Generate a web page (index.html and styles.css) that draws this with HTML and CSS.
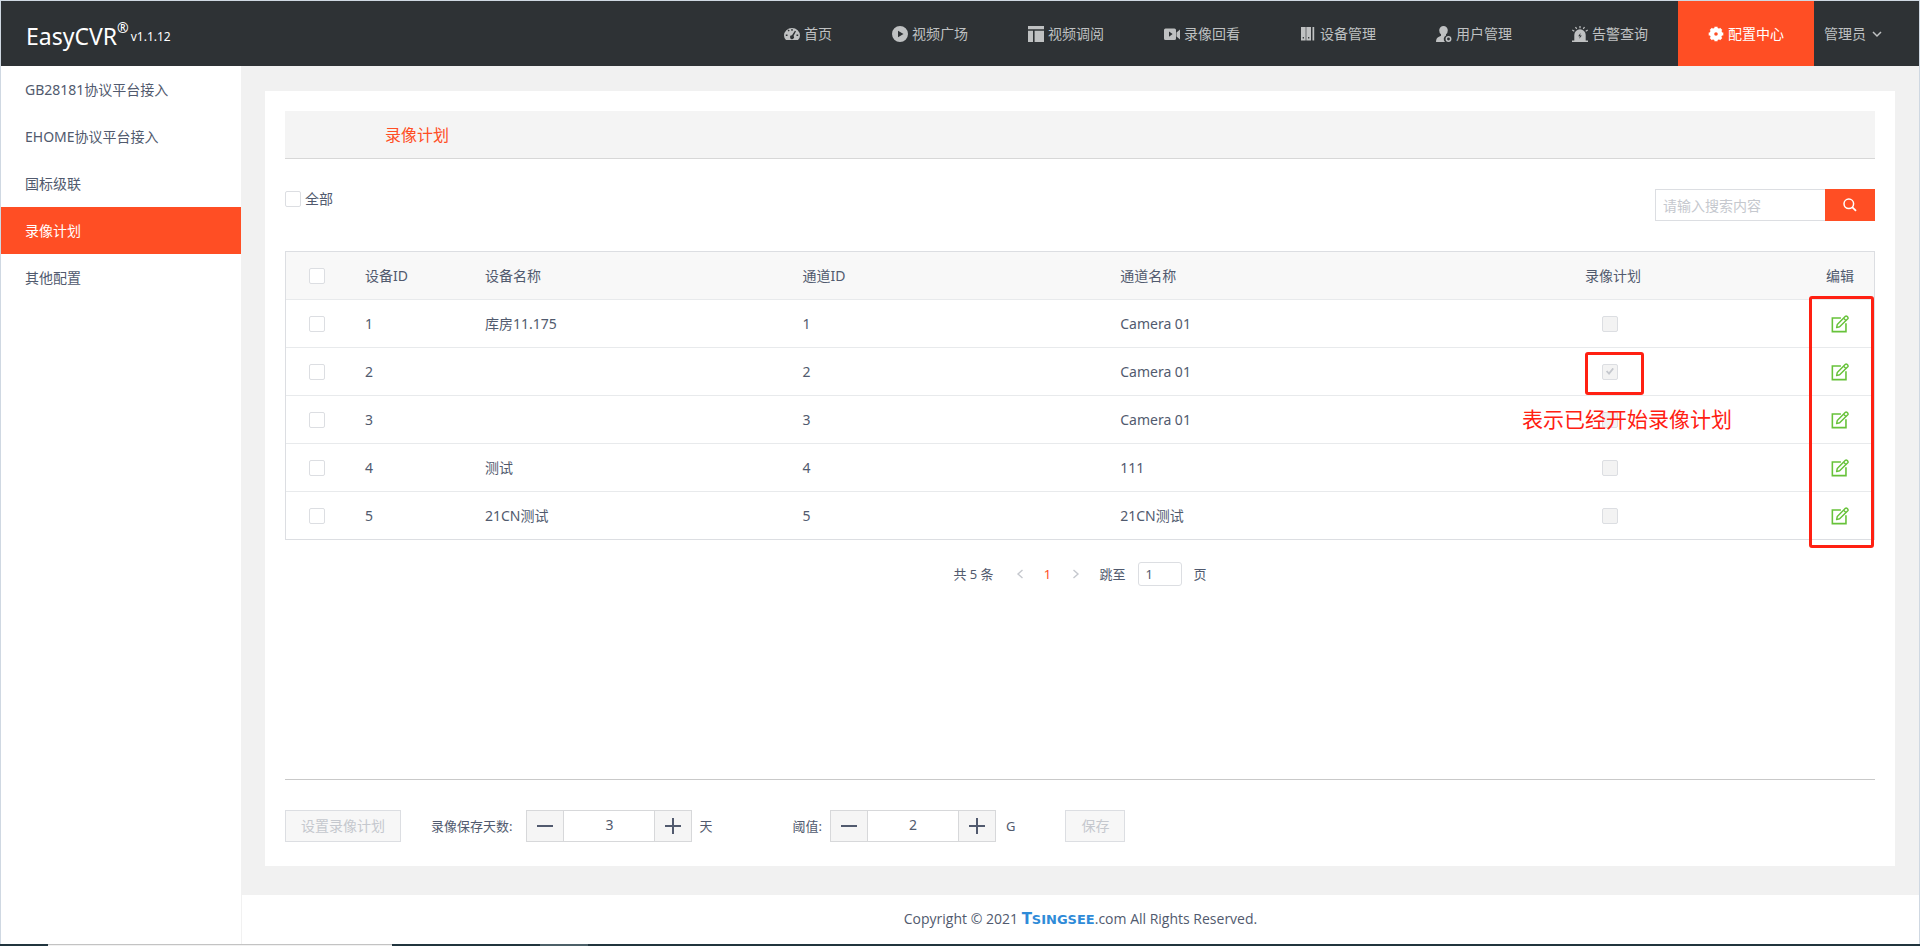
FILE: index.html
```html
<!DOCTYPE html>
<html lang="zh-CN">
<head>
<meta charset="utf-8">
<title>EasyCVR - 录像计划</title>
<link rel="stylesheet" href="styles.css">
</head>
<body>
<svg class="sprite" aria-hidden="true">
  <symbol id="i-edit" viewBox="0 0 16 16">
    <path d="M8.8 2.7H1.2v12.1h12.1V7.4" fill="none" stroke="currentColor" stroke-width="1.4"/>
    <path d="M5 11.2l.6-2.8 7.2-7.2q.7-.6 1.4 0l.7.7q.6.7 0 1.4L7.700 10.500z" fill="none" stroke="currentColor" stroke-width="1.3" stroke-linejoin="round"/>
    <path d="M11.200 2.800l2.100 2.100" stroke="currentColor" stroke-width="1.200"/>
  </symbol>
  <symbol id="i-minus" viewBox="0 0 16 16"><path d="M0 8h16" stroke="currentColor" stroke-width="2"/></symbol>
  <symbol id="i-plus" viewBox="0 0 16 16"><path d="M0 8h16M8 0v16" stroke="currentColor" stroke-width="2"/></symbol>
</svg>
<div class="app">
  <header class="header">
    <div class="brand"><span class="brand-name">EasyCVR</span><span class="brand-reg">®</span><span class="brand-version">v1.1.12</span></div>
    <nav class="nav">
      <a class="nav-item" href="#"><svg class="icon" viewBox="0 0 16 16"><path fill-rule="evenodd" fill="currentColor" d="M2 14Q0 12.200 0 9.500a8 7.500 0 0 1 16 0Q16 12.200 14 14zM7.300 3v1.700h1.400V3zM3.600 4.400l1.100 1.200 1-.9-1.100-1.200zM1.800 8.600v1.300h1.700V8.600zM12.500 8.600v1.300h1.700V8.600zM10.900 4.700L8 9.300a1.900 1.900 0 1 0 1.500.7l2.500-4.800z"/></svg>首页</a>
      <a class="nav-item" href="#"><svg class="icon" viewBox="0 0 16 16"><path fill-rule="evenodd" fill="currentColor" d="M8 0a8 8 0 1 0 0 16A8 8 0 0 0 8 0zM6 4.700v6.600L11.500 8z"/></svg>视频广场</a>
      <a class="nav-item" href="#"><svg class="icon" viewBox="0 0 16 16"><path fill="currentColor" d="M0 0h16v3.200H0zM0 4.800h5V16H0zM6.600 4.800H16V16H6.600z"/></svg>视频调阅</a>
      <a class="nav-item" href="#"><svg class="icon" viewBox="0 0 16 16"><path fill-rule="evenodd" fill="currentColor" d="M1.500 2.500h9Q12 2.500 12 4v8.500q0 1.500-1.500 1.500h-9Q0 14 0 12.500V4q0-1.500 1.500-1.500zM5 5.500v5.200l3.600-2.600zM12.500 6.500L16 3.500v10l-3.500-3z"/></svg>录像回看</a>
      <a class="nav-item" href="#"><svg class="icon" viewBox="0 0 16 16"><path fill-rule="evenodd" fill="currentColor" d="M1 1h4.700v13.500H1zM6.300 1H11v13.500H6.300zM12.500 1h1.700v13.500h-1.700zM2.700 11v1.600h1.200V11zM8.100 11v1.600h1.200V11z"/></svg>设备管理</a>
      <a class="nav-item" href="#"><svg class="icon" viewBox="0 0 16 16"><path fill="currentColor" d="M7.500 0a4.300 4.300 0 0 1 4.300 4.300Q11.800 7 10 8.300v1.200A4 4 0 0 0 9 16H0q0-4 2.500-5L5 9.700V8.300Q3.200 7 3.200 4.300A4.300 4.300 0 0 1 7.500 0z"/><circle cx="12.500" cy="13" r="2.200" fill="none" stroke="currentColor" stroke-width="1.500"/></svg>用户管理</a>
      <a class="nav-item" href="#"><svg class="icon" viewBox="0 0 16 16"><path fill-rule="evenodd" fill="currentColor" d="M0 14.500h2.300V9a5.700 5.700 0 0 1 11.400 0v5.500H16V16H0zM8.500 7L6.200 10.300h1.700l-.6 2.400 2.500-3.200H8.100z"/><path d="M8 0v2.200M3.500 1l1.200 1.900M12.500 1l-1.200 1.900M.3 4l2 1.200M15.700 4l-2 1.200" stroke="currentColor" stroke-width="1.200"/></svg>告警查询</a>
      <a class="nav-item nav-item-active" href="#" aria-current="page"><svg class="icon" viewBox="0 0 16 16"><circle cx="8" cy="8" r="4" fill="none" stroke="currentColor" stroke-width="4.400"/><path d="M8 .7v3M8 12.300v3M.7 8h3M12.300 8h3M2.800 2.800l2 2M11.200 11.200l2 2M13.200 2.800l-2 2M4.800 11.200l-2 2" stroke="currentColor" stroke-width="3.200"/></svg>配置中心</a>
    </nav>
    <button class="user" type="button">管理员<svg class="chevron" viewBox="0 0 10 10"><path d="M1 3l4 4 4-4" fill="none" stroke="currentColor" stroke-width="1.500"/></svg></button>
  </header>
  <div class="body">
    <aside class="sidebar">
      <a class="side-item" href="#">GB28181协议平台接入</a>
      <a class="side-item" href="#">EHOME协议平台接入</a>
      <a class="side-item" href="#">国标级联</a>
      <a class="side-item side-item-active" href="#" aria-current="page">录像计划</a>
      <a class="side-item" href="#">其他配置</a>
    </aside>
    <div class="main">
      <main class="card">
        <h1 class="tabbar">录像计划</h1>
        <div class="toolbar">
          <label class="check-all"><input class="check" type="checkbox">全部</label>
          <form class="search">
            <input class="search-input" type="text" placeholder="请输入搜索内容" aria-label="请输入搜索内容">
            <button class="search-button" type="button" aria-label="搜索"><svg viewBox="0 0 14 14"><circle cx="5.800" cy="5.800" r="4.800" fill="none" stroke="currentColor" stroke-width="1.500"/><path d="M9.200 9.200l3.800 3.600" stroke="currentColor" stroke-width="1.800"/></svg></button>
          </form>
        </div>
        <div class="table-wrap">
          <table class="table">
            <colgroup><col class="col-check"><col class="col-id"><col class="col-text"><col class="col-text"><col class="col-text"><col><col class="col-edit"></colgroup>
            <thead>
              <tr><th class="center"><input class="check" type="checkbox" aria-label="全选"></th><th>设备ID</th><th>设备名称</th><th>通道ID</th><th>通道名称</th><th class="center">录像计划</th><th class="center">编辑</th></tr>
            </thead>
            <tbody>
              <tr><td class="center"><input class="check" type="checkbox" aria-label="选择 1"></td><td>1</td><td>库房11.175</td><td>1</td><td>Camera 01</td><td class="center"><span class="plan"><input class="check" type="checkbox" disabled aria-label="录像计划 1"></span></td><td class="center"><button class="edit" type="button" aria-label="编辑 1"><svg><use href="#i-edit"/></svg></button></td></tr>
              <tr><td class="center"><input class="check" type="checkbox" aria-label="选择 2"></td><td>2</td><td></td><td>2</td><td>Camera 01</td><td class="center"><span class="plan"><input class="check" type="checkbox" checked disabled aria-label="录像计划 2"><span class="mark mark-plan"></span></span></td><td class="center"><button class="edit" type="button" aria-label="编辑 2"><svg><use href="#i-edit"/></svg></button></td></tr>
              <tr><td class="center"><input class="check" type="checkbox" aria-label="选择 3"></td><td>3</td><td></td><td>3</td><td>Camera 01</td><td class="center"><span class="plan"><input class="check" type="checkbox" disabled aria-label="录像计划 3"><span class="note">表示已经开始录像计划</span></span></td><td class="center"><button class="edit" type="button" aria-label="编辑 3"><svg><use href="#i-edit"/></svg></button></td></tr>
              <tr><td class="center"><input class="check" type="checkbox" aria-label="选择 4"></td><td>4</td><td>测试</td><td>4</td><td>111</td><td class="center"><span class="plan"><input class="check" type="checkbox" disabled aria-label="录像计划 4"></span></td><td class="center"><button class="edit" type="button" aria-label="编辑 4"><svg><use href="#i-edit"/></svg></button></td></tr>
              <tr><td class="center"><input class="check" type="checkbox" aria-label="选择 5"></td><td>5</td><td>21CN测试</td><td>5</td><td>21CN测试</td><td class="center"><span class="plan"><input class="check" type="checkbox" disabled aria-label="录像计划 5"></span></td><td class="center"><button class="edit" type="button" aria-label="编辑 5"><svg><use href="#i-edit"/></svg></button></td></tr>
            </tbody>
          </table>
          <span class="mark mark-edit"></span>
        </div>
        <div class="pager">
          <span class="pager-total">共 5 条</span>
          <button class="pager-arrow" type="button" disabled aria-label="上一页"><svg viewBox="0 0 8 10"><path d="M6.500 1L2 5l4.500 4" fill="none" stroke="currentColor" stroke-width="1.400"/></svg></button>
          <button class="pager-page" type="button">1</button>
          <button class="pager-arrow" type="button" disabled aria-label="下一页"><svg viewBox="0 0 8 10"><path d="M1.500 1L6 5 1.500 9" fill="none" stroke="currentColor" stroke-width="1.400"/></svg></button>
          <label class="pager-jump">跳至<input class="pager-input" type="text" value="1">页</label>
        </div>
        <div class="settings">
          <button class="btn" type="button" disabled>设置录像计划</button>
          <div class="field field-days">
            <label for="days">录像保存天数:</label>
            <div class="stepper"><button type="button" aria-label="减少天数"><svg><use href="#i-minus"/></svg></button><input id="days" type="text" value="3"><button type="button" aria-label="增加天数"><svg><use href="#i-plus"/></svg></button></div>
            <span>天</span>
          </div>
          <div class="field field-limit">
            <label for="limit">阈值:</label>
            <div class="stepper"><button type="button" aria-label="减小阈值"><svg><use href="#i-minus"/></svg></button><input id="limit" type="text" value="2"><button type="button" aria-label="增大阈值"><svg><use href="#i-plus"/></svg></button></div>
            <span class="unit">G</span>
          </div>
          <button class="btn" type="button" disabled>保存</button>
        </div>
      </main>
      <footer class="footer"><p>Copyright © 2021 <a class="wordmark" href="#"><span class="wordmark-lead">T</span>SINGSEE</a>.com All Rights Reserved.</p></footer>
    </div>
  </div>
  <div class="taskbar"><span class="task-window"></span><span class="task-button"></span></div>
</div>
</body>
</html>
```

FILE: styles.css
```css
* {
  box-sizing: border-box;
}

body {
  margin: 0;
  color: #515a6e;
  background: #fff;
  font: 14px/20px "Noto Sans", "Noto Sans CJK SC", sans-serif;
}

a {
  color: inherit;
  text-decoration: none;
}

button,
input {
  margin: 0;
  color: inherit;
  font: inherit;
}

svg {
  display: block;
  flex: none;
}

.sprite {
  display: none;
}

.app {
  display: flex;
  flex-direction: column;
  min-height: 100vh;
  border: 1px solid #cfd8e2;
  border-bottom: 0;
}

/* Header */
.header {
  display: flex;
  height: 65px;
  color: #bfc1c2;
  background: #2e3235;
}

.brand {
  display: flex;
  align-items: flex-start;
  padding: 11px 0 0 25px;
  color: #fff;
}

.brand-name {
  font-size: 23px;
  line-height: 48px;
}

.brand-reg {
  font-size: 14px;
  line-height: 32px;
}

.brand-version {
  margin-left: 2px;
  font-size: 12px;
  line-height: 50px;
}

.nav {
  display: flex;
  margin-left: auto;
}

.nav-item {
  display: flex;
  align-items: center;
  gap: 4px;
  padding: 0 30px;
}

.nav-item-active {
  color: #fff;
  background: #ff4e24;
}

.icon {
  width: 16px;
  height: 16px;
}

.user {
  display: flex;
  align-items: center;
  gap: 6px;
  width: 105px;
  padding: 0 10px;
  border: 0;
  background: none;
}

.chevron {
  width: 10px;
  height: 10px;
}

/* Body */
.body {
  display: flex;
  flex: 1;
}

.sidebar {
  width: 240px;
  flex: none;
  background: #fff;
}

.side-item {
  display: block;
  padding: 0 24px;
  line-height: 47px;
}

.side-item-active {
  color: #fff;
  background: #ff4e24;
}

.main {
  display: flex;
  flex: 1;
  flex-direction: column;
  min-width: 0;
  border-left: 1px solid #f1f1f1;
  background: #f1f1f1;
}

.card {
  display: flex;
  flex: 1;
  flex-direction: column;
  margin: 25px 24px 29px 23px;
  padding: 20px 20px 24px;
  background: #fff;
}

.tabbar {
  margin: 0;
  padding: 2px 100px 0;
  border-bottom: 1px solid #d7d7d7;
  color: #ff4e24;
  background: #f4f4f4;
  font-size: 16px;
  font-weight: 400;
  line-height: 45px;
}

.toolbar {
  display: flex;
  align-items: flex-start;
  justify-content: space-between;
  padding: 30px 0;
}

.check-all {
  display: flex;
  align-items: center;
  gap: 4px;
}

.check {
  display: block;
  width: 16px;
  height: 16px;
  border: 1px solid #dcdee2;
  border-radius: 2px;
  background: #fff;
  appearance: none;
}

.check:disabled {
  background: #f3f3f3;
}

.check:checked::before {
  display: block;
  width: 8px;
  height: 8px;
  margin: 3px;
  background: #c5c8ce;
  clip-path: polygon(0 50%, 18% 36%, 38% 58%, 84% 4%, 100% 20%, 40% 94%);
  content: "";
}

.search {
  display: flex;
}

.search-input {
  width: 170px;
  height: 32px;
  padding: 0 7px;
  border: 1px solid #dcdee2;
  border-right: 0;
  border-radius: 0;
  background: #fff;
}

.search-input::placeholder {
  color: #c5c8ce;
}

.search-button {
  display: flex;
  align-items: center;
  justify-content: center;
  width: 50px;
  padding: 0;
  border: 0;
  color: #fff;
  background: #ff4e24;
}

.search-button svg {
  width: 14px;
  height: 14px;
}

/* Table */
.table-wrap {
  position: relative;
  border: 1px solid #dcdee2;
  border-bottom-width: 0;
}

.table {
  width: 100%;
  border-collapse: separate;
  border-spacing: 0;
  table-layout: fixed;
}

.col-check {
  width: 61px;
}

.col-id {
  width: 120px;
}

.col-text {
  width: 20%;
}

.col-edit {
  width: 68px;
}

.table th,
.table td {
  height: 48px;
  padding: 0 18px;
  border-bottom: 1px solid #e8eaec;
  font-weight: 400;
  text-align: left;
}

.table th {
  background: #f8f8f8;
}

.table tr:last-child td {
  border-bottom-color: #dcdee2;
}

.table .center {
  padding: 0;
  text-align: center;
}

.center .check {
  margin: 0 auto;
}

.plan {
  position: relative;
  display: block;
  width: 16px;
  margin-left: calc(50% - 11px);
}

.edit {
  display: block;
  margin: 0 auto;
  padding: 0;
  border: 0;
  color: #67c23a;
  background: none;
}

.edit svg {
  width: 18px;
  height: 18px;
}

/* Callouts over the table */
.mark {
  position: absolute;
  border: 3px solid #ff2012;
  border-radius: 3px;
  pointer-events: none;
}

.mark-plan {
  inset: -12px -26px -15px -17px;
}

.mark-edit {
  top: 44px;
  right: 0;
  bottom: -8px;
  width: 65px;
}

.note {
  position: absolute;
  top: -8px;
  left: -80px;
  color: #ff2012;
  font-size: 21px;
  line-height: 30px;
  white-space: nowrap;
}

/* Pagination */
.pager {
  display: flex;
  align-items: center;
  justify-content: center;
  padding-top: 22px;
  font-size: 13px;
}

.pager-total {
  margin-right: 12px;
}

.pager-arrow,
.pager-page {
  display: flex;
  align-items: center;
  justify-content: center;
  width: 28px;
  height: 24px;
  padding: 0;
  border: 0;
  background: none;
}

.pager-arrow {
  color: #c5c8ce;
}

.pager-arrow svg {
  width: 8px;
  height: 10px;
}

.pager-page {
  color: #ff4e24;
}

.pager-jump {
  display: flex;
  align-items: center;
  margin-left: 10px;
}

.pager-input {
  width: 44px;
  height: 24px;
  margin: 0 12px;
  padding: 0 7px;
  border: 1px solid #dcdee2;
  border-radius: 3px;
}

/* Settings */
.settings {
  display: flex;
  align-items: center;
  margin-top: auto;
  padding-top: 30px;
  border-top: 1px solid #c9c9c9;
}

.btn {
  height: 32px;
  padding: 0 15px;
  border: 1px solid #dcdee2;
  color: #c5c8ce;
  background: #f7f7f7;
}

.field {
  display: flex;
  align-items: center;
  font-size: 13px;
}

.field-days {
  margin-left: 30px;
}

.field-days label {
  margin-right: 14px;
}

.field-limit {
  margin-left: 80px;
}

.field-limit label {
  margin-right: 8px;
}

.stepper {
  display: flex;
  height: 32px;
  margin-right: 7px;
  border: 1px solid #d7d8da;
}

.stepper button {
  display: flex;
  align-items: center;
  justify-content: center;
  width: 36px;
  padding: 0;
  border: 0;
  background: #f5f5f5;
}

.stepper svg {
  width: 16px;
  height: 16px;
}

.stepper input {
  width: 92px;
  padding: 0 0 2px;
  border: solid #d7d8da;
  border-width: 0 1px;
  border-radius: 0;
  font-size: 14px;
  text-align: center;
}

.unit {
  margin: 0 50px 0 3px;
}

/* Footer */
.footer {
  display: flex;
  align-items: center;
  justify-content: center;
  height: 49px;
  background: #fff;
}

.footer p {
  margin: 0;
  font-family: "Open Sans", sans-serif;
}

.wordmark {
  color: #2f8bd8;
  font: bold 13px/20px "DejaVu Sans", sans-serif;
}

.wordmark-lead {
  font-size: 15px;
}

.taskbar {
  display: flex;
  height: 2px;
  margin: 0 -1px;
  background: #21353e;
}

.task-window {
  width: 344px;
  margin-left: 48px;
  border-top: 1px solid #c3c3c3;
  background: #f1f1f1;
}

.task-button {
  width: 48px;
  margin-left: 148px;
  background: #4c6068;
}
```
